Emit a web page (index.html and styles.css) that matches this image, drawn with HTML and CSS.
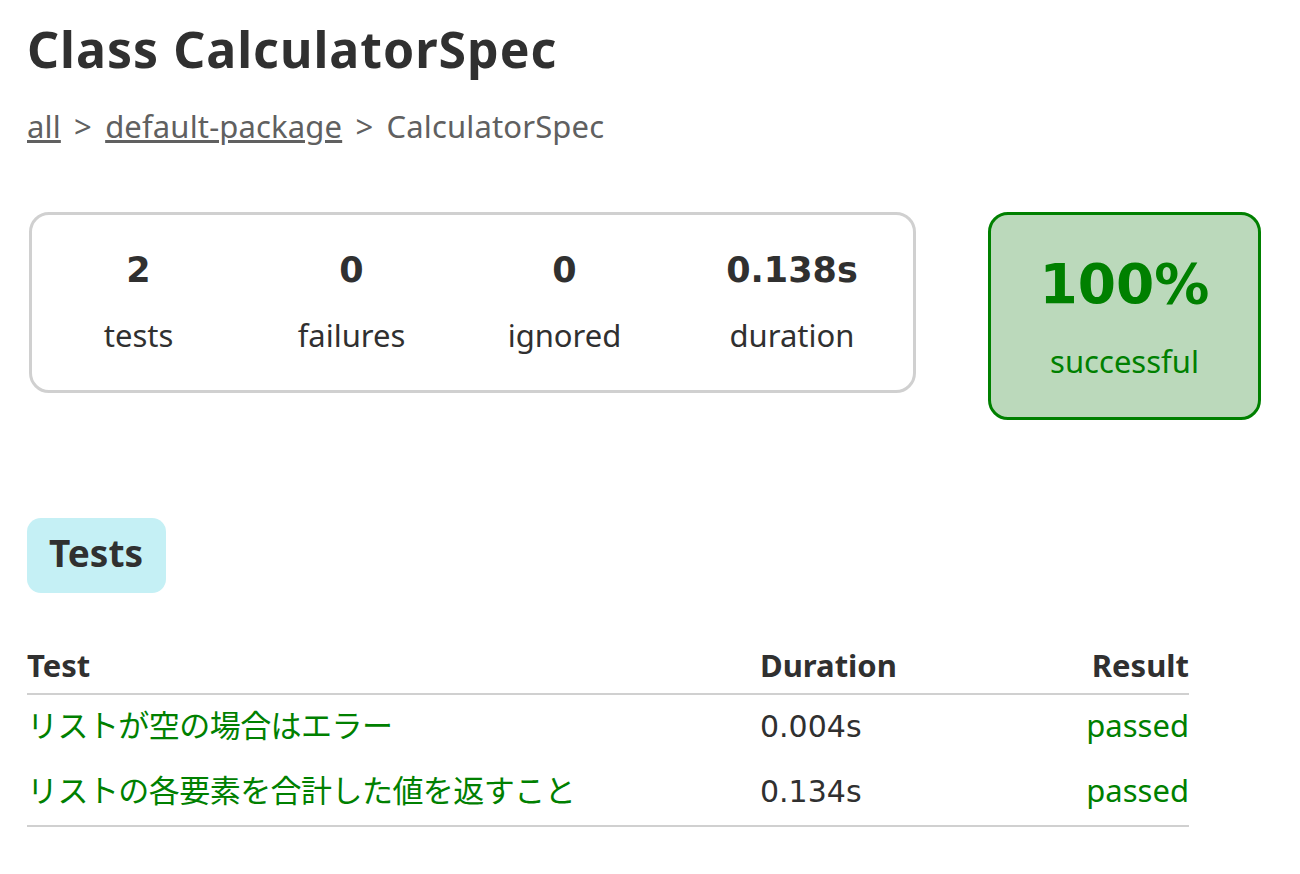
FILE: index.html
```html
<!DOCTYPE html>
<html lang="ja">
<head>
<meta charset="utf-8">
<title>Test results - Class CalculatorSpec</title>
<link rel="stylesheet" href="styles.css">
</head>
<body>
<div class="content">
  <h1 class="title">Class CalculatorSpec</h1>
  <div class="breadcrumbs"><a href="#">all</a> &gt; <a href="#">default-package</a> &gt; CalculatorSpec</div>

  <div class="summary">
    <div class="summary-group">
      <div class="info-box">
        <div class="counter">2</div>
        <p class="label">tests</p>
      </div>
      <div class="info-box">
        <div class="counter">0</div>
        <p class="label">failures</p>
      </div>
      <div class="info-box">
        <div class="counter">0</div>
        <p class="label">ignored</p>
      </div>
      <div class="info-box info-box-wide">
        <div class="counter">0.138s</div>
        <p class="label">duration</p>
      </div>
    </div>
    <div class="success-rate">
      <div class="percent">100%</div>
      <p class="label">successful</p>
    </div>
  </div>

  <div class="tabs">
    <div class="tab-link selected"><h2 class="tab-title">Tests</h2></div>
  </div>

  <table class="tests-table">
    <colgroup>
      <col class="col-name">
      <col class="col-duration">
      <col class="col-result">
    </colgroup>
    <thead>
      <tr>
        <th>Test</th>
        <th>Duration</th>
        <th class="result">Result</th>
      </tr>
    </thead>
    <tbody>
      <tr>
        <td class="name success">リストが空の場合はエラー</td>
        <td class="duration">0.004s</td>
        <td class="result success">passed</td>
      </tr>
      <tr>
        <td class="name success">リストの各要素を合計した値を返すこと</td>
        <td class="duration">0.134s</td>
        <td class="result success">passed</td>
      </tr>
    </tbody>
  </table>
</div>
</body>
</html>
```

FILE: styles.css
```css
html, body {
  margin: 0;
  padding: 0;
  background: #ffffff;
}

body {
  font-family: "Noto Sans", "Noto Sans CJK JP", sans-serif;
  font-size: 31px;
  color: #303030;
}

.content {
  padding: 0 0 40px 27px;
}

.title {
  margin: 0;
  padding-top: 23.6px;
  font-size: 50px;
  line-height: 1;
  font-weight: 700;
  letter-spacing: 1px;
  white-space: nowrap;
}

.breadcrumbs {
  margin-top: 37px;
  line-height: 1;
  color: #606060;
  word-spacing: 5px;
  letter-spacing: 0.15px;
}

.breadcrumbs a {
  color: #606060;
  text-decoration: underline;
}

.summary {
  margin-top: 70.5px;
  margin-left: 2px;
  display: flex;
  align-items: flex-start;
}

.summary-group {
  display: flex;
  border: 3px solid #d0d0d0;
  border-radius: 20px;
}

.info-box {
  width: 213px;
  padding: 37.4px 0 39.5px;
  text-align: center;
}

.info-box-wide {
  width: 242px;
}

.counter {
  font-family: "DejaVu Sans", sans-serif;
  font-size: 35px;
  font-weight: 700;
  line-height: 37px;
  margin-bottom: 30.1px;
}

.label {
  margin: 0;
  line-height: 1;
}

.success-rate {
  margin-left: 72px;
  width: 267px;
  padding: 40.5px 0 40.5px;
  text-align: center;
  background: #bbd9bb;
  border: 3px solid #008000;
  border-radius: 20px;
  color: #008000;
}

.percent {
  font-family: "DejaVu Sans", sans-serif;
  font-size: 55px;
  font-weight: 700;
  line-height: 57px;
  margin-bottom: 33px;
}

.tabs {
  margin-top: 98px;
  display: flex;
}

.tab-link {
  padding: 16px 23px 22px 22px;
  border-radius: 14px;
}

.tab-link.selected {
  background: #c5f0f5;
}

.tab-title {
  margin: 0;
  font-size: 37px;
  line-height: 1;
  font-weight: 700;
}

.tests-table {
  margin-top: 49.5px;
  width: 1162px;
  border-collapse: collapse;
  border-bottom: 2px solid #d0d0d0;
}

.col-name {
  width: 733px;
}

.tests-table th {
  text-align: left;
  font-weight: 700;
  line-height: 45px;
  padding: 0 0 5.5px;
  border-bottom: 2px solid #d0d0d0;
  white-space: nowrap;
}

.tests-table td {
  line-height: 45px;
  padding: 8px 0 12px;
  white-space: nowrap;
  vertical-align: baseline;
}

.tests-table td.name {
  letter-spacing: -0.55px;
}

.tests-table td.duration {
  font-family: "DejaVu Sans", sans-serif;
  font-size: 30px;
  line-height: 40px;
}

.tests-table .result {
  text-align: right;
}

.success {
  color: #008000;
}
```
